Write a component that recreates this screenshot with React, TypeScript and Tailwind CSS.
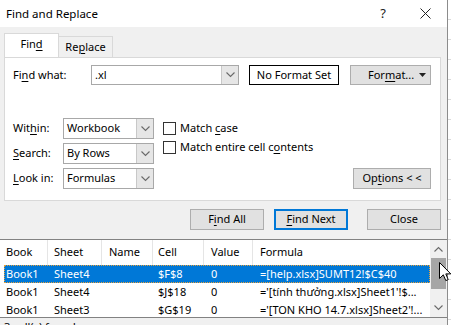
import React from "react";

const U = ({ children }: { children: React.ReactNode }) => (
  <span className="underline underline-offset-[2px] decoration-[1px]">{children}</span>
);

const Chevron = ({ up = false }: { up?: boolean }) => (
  <svg width="9" height="6" viewBox="0 0 9 6" className={up ? "rotate-180" : ""}>
    <polyline points="0.5,0.5 4.5,4.5 8.5,0.5" fill="none" stroke="#6a6a6a" strokeWidth="1.1" />
  </svg>
);

const Select = ({ value }: { value: string }) => (
  <div className="flex h-[21px] w-[91px] border border-[#a8a8a8] bg-white">
    <div className="flex flex-1 items-center pl-[3px]">{value}</div>
    <div className="flex w-[17px] items-center justify-center border-l border-[#c8c8c8] bg-[#e6e6e6]">
      <Chevron />
    </div>
  </div>
);

const Btn = ({ children, focus = false, w = "w-[74px]" }: { children: React.ReactNode; focus?: boolean; w?: string }) => (
  <div
    className={`flex h-[21px] ${w} items-center justify-center bg-[#e1e1e1] ${
      focus ? "border-2 border-[#0078d7]" : "border border-[#adadad]"
    }`}
  >
    {children}
  </div>
);

const Check = ({ children }: { children: React.ReactNode }) => (
  <div className="flex h-[19px] items-center">
    <div className="h-[13px] w-[13px] border border-[#333] bg-white" />
    <span className="ml-[4px]">{children}</span>
  </div>
);

const rows = [
  { book: "Book1", sheet: "Sheet4", cell: "$F$8", value: "0", formula: "=[help.xlsx]SUMT12!$C$40", sel: true },
  { book: "Book1", sheet: "Sheet4", cell: "$J$18", value: "0", formula: "='[tính thưởng.xlsx]Sheet1'!$...", sel: false },
  { book: "Book1", sheet: "Sheet3", cell: "$G$19", value: "0", formula: "='[TON KHO 14.7.xlsx]Sheet2'!...", sel: false },
];

export default function App() {
  return (
    <div className="flex h-[325px] w-[451px] overflow-hidden bg-white text-[11px] text-black [font-family:'Noto_Sans',sans-serif]">
      {/* dialog */}
      <div className="flex w-[448px] shrink-0 flex-col border-r border-[#8c8c8c] bg-[#f0f0f0]">
        {/* title bar */}
        <div className="flex h-[27px] shrink-0 items-center bg-white pl-[6px]">
          <span className="text-[11.5px]">Find and Replace</span>
          <span className="ml-auto mr-[34px] text-[13px] text-[#222]">?</span>
          <svg width="11" height="11" viewBox="0 0 11 11" className="mr-[16px]">
            <path d="M0.5 0.5 L10.5 10.5 M10.5 0.5 L0.5 10.5" stroke="#222" strokeWidth="1" />
          </svg>
        </div>

        <div className="flex flex-col pl-[4px] pt-[7px]">
          {/* tabs */}
          <div className="relative z-10 flex h-[23px] items-end">
            <div className="flex h-[24px] w-[55px] items-center justify-center border border-b-0 border-[#d9d9d9] bg-white pb-[2px]">
              Fin<U>d</U>
            </div>
            <div className="flex h-[21px] w-[54px] items-center justify-center border border-b-0 border-l-0 border-[#d9d9d9] bg-[#f0f0f0]">
              Re<U>p</U>lace
            </div>
          </div>

          {/* tab panel */}
          <div className="flex h-[144px] w-[437px] flex-col border border-[#d9d9d9] bg-white pl-[8px] pr-[9px] pt-[7px]">
            <div className="flex h-[20px] items-center">
              <div className="w-[78px]">
                Fi<U>n</U>d what:
              </div>
              <div className="flex h-[20px] w-[148px] border border-[#a8a8a8] bg-white">
                <div className="flex flex-1 items-center pl-[3px]">.xl</div>
                <div className="flex w-[17px] items-center justify-center border-l border-[#c8c8c8] bg-[#e6e6e6]">
                  <Chevron />
                </div>
              </div>
              <div className="ml-[10px] flex h-[20px] w-[90px] items-center justify-center border border-black bg-white">
                No Format Set
              </div>
              <div className="ml-[11px] flex h-[20px] w-[81px] items-center border border-[#adadad] bg-[#e1e1e1] pl-[17px]">
                <span>
                  For<U>m</U>at...
                </span>
                <svg width="7" height="4" viewBox="0 0 7 4" className="ml-auto mr-[4px]">
                  <polygon points="0,0 7,0 3.5,4" fill="#222" />
                </svg>
              </div>
            </div>

            <div className="mt-[33px] flex">
              <div className="flex flex-col gap-[4px]">
                <div className="flex items-center">
                  <div className="w-[50px]">
                    Wit<U>h</U>in:
                  </div>
                  <Select value="Workbook" />
                </div>
                <div className="flex items-center">
                  <div className="w-[50px]">
                    <U>S</U>earch:
                  </div>
                  <Select value="By Rows" />
                </div>
                <div className="flex items-center">
                  <div className="w-[50px]">
                    <U>L</U>ook in:
                  </div>
                  <Select value="Formulas" />
                </div>
              </div>
              <div className="ml-[9px] flex flex-1 flex-col pt-[1px]">
                <Check>
                  Match <U>c</U>ase
                </Check>
                <Check>
                  Match entire cell c<U>o</U>ntents
                </Check>
                <div className="mt-auto flex justify-end">
                  <Btn w="w-[78px]">
                    <span>
                      Op<U>t</U>ions &lt; &lt;
                    </span>
                  </Btn>
                </div>
              </div>
            </div>
          </div>

          {/* buttons */}
          <div className="mt-[8px] flex pl-[186px]">
            <Btn>
              <span>
                F<U>i</U>nd All
              </span>
            </Btn>
            <div className="ml-[10px]">
              <Btn focus>
                <span>
                  <U>F</U>ind Next
                </span>
              </Btn>
            </div>
            <div className="ml-[19px]">
              <Btn>Close</Btn>
            </div>
          </div>

          {/* results list */}
          <div className="relative -ml-[4px] mt-[9px] flex h-[79px] w-[447px] border-y border-[#828282] bg-white">
            <div className="flex flex-1 flex-col overflow-hidden">
              <div className="flex h-[25px] shrink-0 items-center">
                <div className="flex h-full w-[48px] items-center border-r border-[#e5e5e5] pl-[6px]">Book</div>
                <div className="flex h-full w-[54px] items-center border-r border-[#e5e5e5] pl-[6px]">Sheet</div>
                <div className="flex h-full w-[51px] items-center border-r border-[#e5e5e5] pl-[7px]">Name</div>
                <div className="flex h-full w-[51px] items-center border-r border-[#e5e5e5] pl-[5px]">Cell</div>
                <div className="flex h-full w-[49px] items-center border-r border-[#e5e5e5] pl-[7px]">Value</div>
                <div className="flex h-full flex-1 items-center pl-[7px]">Formula</div>
              </div>
              {rows.map((r, i) => (
                <div key={i} className="flex h-[18px] shrink-0 pl-[4px]">
                  <div
                    className={`flex flex-1 items-center whitespace-nowrap ${
                      r.sel ? "border border-dotted border-[#e8a13c] bg-[#0078d7] text-white" : "border border-transparent"
                    }`}
                  >
                    <div className="w-[43px] pl-[1px]">{r.book}</div>
                    <div className="w-[54px] pl-[6px]">{r.sheet}</div>
                    <div className="w-[51px]" />
                    <div className="w-[51px] pl-[5px]">{r.cell}</div>
                    <div className="w-[49px] pl-[7px]">{r.value}</div>
                    <div className="flex-1 overflow-hidden pl-[7px]">{r.formula}</div>
                  </div>
                </div>
              ))}
            </div>
            {/* scrollbar */}
            <div className="flex w-[17px] shrink-0 flex-col items-center bg-[#f0f0f0]">
              <div className="flex h-[18px] items-center justify-center">
                <Chevron up />
              </div>
              <div className="h-[31px] w-[15px] bg-[#a6a6a6]" />
              <div className="mt-auto flex h-[18px] items-center justify-center">
                <Chevron />
              </div>
            </div>
            {/* mouse cursor */}
            <svg width="13" height="20" viewBox="0 0 13 20" className="absolute left-[439px] top-[22px]">
              <path
                d="M0.5 0.5 L0.5 16.5 L4.3 12.8 L6.8 18.6 L9.2 17.6 L6.8 11.9 L11.8 11.9 Z"
                fill="white"
                stroke="black"
                strokeWidth="1"
              />
            </svg>
          </div>

          <div className="pt-[1px]">3 cell(s) found</div>
        </div>
      </div>

      {/* excel grid behind the dialog */}
      <div className="flex flex-1 flex-col bg-white">
        {Array.from({ length: 17 }).map((_, i) => (
          <div key={i} className="h-[20px] shrink-0 border-b border-[#dadada]" />
        ))}
      </div>
    </div>
  );
}
